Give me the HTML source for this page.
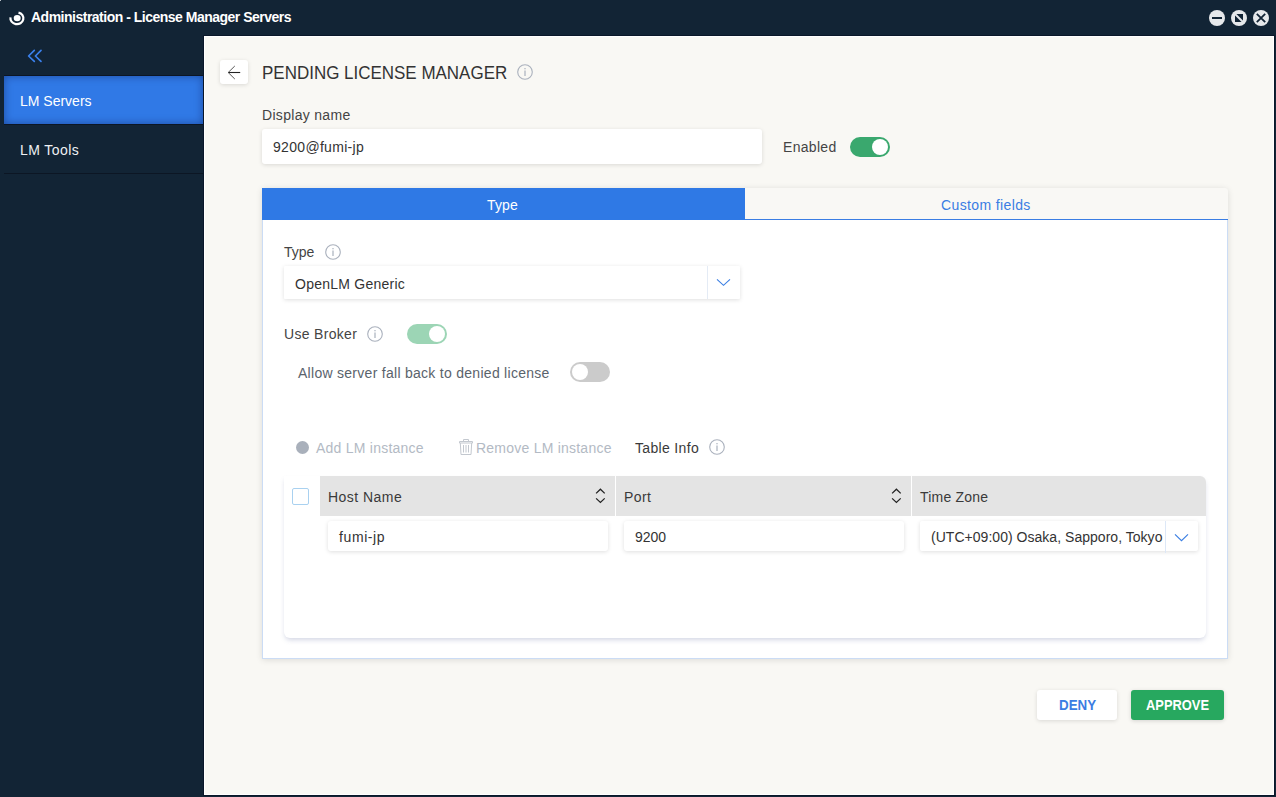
<!DOCTYPE html>
<html><head><meta charset="utf-8">
<style>
*{margin:0;padding:0;box-sizing:border-box}
html,body{width:1276px;height:797px;overflow:hidden;background:#122435;font-family:"Liberation Sans",sans-serif}
.a{position:absolute}
.t{position:absolute;white-space:nowrap;line-height:1;font-size:14px;color:#3a3a3a}
#content{position:absolute;left:203px;top:35px;width:1072px;height:761px;border:1px solid #0a1729;background:#fff}
#content .in{position:absolute;left:0;top:0;right:0;bottom:0;border-left:1px solid #fff;border-top:1px solid #fff;border-right:1px solid #fff;border-bottom:1px solid #fff;background:#f9f8f4}
.toggle{position:absolute;width:40px;height:20px;border-radius:10px}
.knob{position:absolute;top:2px;width:16px;height:16px;border-radius:50%;background:#fff}
.info{position:absolute;width:16px;height:16px}
.box{position:absolute;background:#fff;border-radius:3px;box-shadow:0 1px 4px rgba(0,0,0,.13)}
</style></head><body>

<!-- title bar -->
<div class="a" style="left:0;top:0;width:1px;height:1px;background:#bac1c8"></div>
<svg class="a" style="left:5px;top:6px" width="24" height="24" viewBox="0 0 24 24">
  <ellipse cx="12.2" cy="12.1" rx="3.5" ry="3.2" fill="#fff"/>
  <path d="M13.5 6.58 A6.5 5.9 0 1 1 5.48 11.38" fill="none" stroke="#fff" stroke-width="2.2"/>
</svg>
<div id="t1" class="t" style="left:31px;top:10px;font-size:14px;letter-spacing:-0.5px;font-weight:bold;color:#fff">Administration - License Manager Servers</div>

<svg class="a" style="left:1205px;top:6px" width="70" height="24" viewBox="0 0 70 24">
  <circle cx="12" cy="12" r="8" fill="#e6e8eb"/>
  <rect x="7" y="11" width="10" height="2" fill="#122435"/>
  <circle cx="34" cy="12" r="8" fill="#e6e8eb"/>
  <rect x="30" y="8" width="8" height="8" fill="#122435"/>
  <line x1="29.5" y1="7.5" x2="38.5" y2="16.5" stroke="#e6e8eb" stroke-width="2"/>
  <circle cx="56" cy="12" r="8" fill="#e6e8eb"/>
  <path d="M51.8 7.8 L60.2 16.2 M60.2 7.8 L51.8 16.2" stroke="#122435" stroke-width="1.8"/>
</svg>

<!-- sidebar -->
<svg class="a" style="left:26px;top:48px" width="20" height="16" viewBox="0 0 20 16">
  <path d="M8.3 2.4 L2.6 8 L8.3 13.4 M15 2.4 L9.4 8 L15 13.4" fill="none" stroke="#3a80ec" stroke-width="1.7" stroke-linecap="round" stroke-linejoin="round"/>
</svg>
<div class="a" style="left:4px;top:75px;width:199px;height:1px;background:#0c1624"></div>
<div class="a" style="left:4px;top:76px;width:199px;height:48px;background:#3079e6;box-shadow:inset 0 0 9px rgba(0,10,60,.4)"></div>
<div class="a" style="left:4px;top:124px;width:199px;height:1px;background:#0c1624"></div>
<div id="t2" class="t" style="left:20px;top:94px;font-size:14px;color:#fff">LM Servers</div>
<div id="t3" class="t" style="left:20px;top:143px;font-size:14px;letter-spacing:0.43px;color:#eef0f3">LM Tools</div>
<div class="a" style="left:4px;top:173px;width:199px;height:1px;background:#0c1624"></div>

<!-- content -->
<div id="content"><div class="in"></div></div>

<!-- back button -->
<div class="box" style="left:220px;top:60px;width:28px;height:24px"></div>
<svg class="a" style="left:220px;top:60px" width="28" height="24" viewBox="0 0 28 24">
  <path d="M20.2 12.5 H8.2" stroke="#222" stroke-width="1.1"/><path d="M14.8 6 L8.2 12.5 L14.8 19" fill="none" stroke="#444" stroke-width="0.9"/>
</svg>

<div id="t4" class="t" style="left:262px;top:64px;font-size:18px;color:#333;transform:scaleX(0.943);transform-origin:0 0">PENDING LICENSE MANAGER</div>
<svg class="info" style="left:517px;top:64px" viewBox="0 0 16 16"><circle cx="8" cy="8" r="7.3" fill="none" stroke="#aab1bd" stroke-width="1.1"/><rect x="7.4" y="4" width="1.2" height="1.3" fill="#aab1bd"/><rect x="7.4" y="6.5" width="1.2" height="5.5" fill="#aab1bd"/></svg>

<div id="t5" class="t" style="left:262px;top:108px;letter-spacing:0.31px;color:#444">Display name</div>
<div class="box" style="left:262px;top:129px;width:500px;height:35px"></div>
<div id="t6" class="t" style="left:273px;top:140px;letter-spacing:0.31px;color:#333">9200@fumi-jp</div>

<div id="t7" class="t" style="left:783px;top:140px;letter-spacing:0.3px;color:#444">Enabled</div>
<div class="toggle" style="left:850px;top:137px;background:#3aa86e"><div class="knob" style="left:22px"></div></div>

<!-- tabs panel -->
<div class="a" style="left:262px;top:188px;width:966px;height:471px;border-top-right-radius:4px;box-shadow:0 1px 6px rgba(0,0,0,.12)"></div>
<div class="a" style="left:262px;top:188px;width:966px;height:32px;background:#f9f8f5;border-top-right-radius:4px"></div>
<div class="a" style="left:262px;top:188px;width:483px;height:32px;background:#2f79e5"></div>
<div class="a" style="left:745px;top:219px;width:483px;height:1px;background:#3a7de3"></div>
<div id="t8" class="t" style="left:487px;top:198px;letter-spacing:0.17px;color:#fff">Type</div>
<div id="t9" class="t" style="left:941px;top:198px;letter-spacing:0.38px;color:#3a7de3">Custom fields</div>
<div class="a" style="left:262px;top:220px;width:966px;height:439px;background:#fff;border:1px solid #cbdcf5;border-top:none"></div>

<div id="t10" class="t" style="left:284px;top:245px;color:#444">Type</div>
<svg class="info" style="left:325px;top:244px" viewBox="0 0 16 16"><circle cx="8" cy="8" r="7.3" fill="none" stroke="#aab1bd" stroke-width="1.1"/><rect x="7.4" y="4" width="1.2" height="1.3" fill="#aab1bd"/><rect x="7.4" y="6.5" width="1.2" height="5.5" fill="#aab1bd"/></svg>
<div class="box" style="left:284px;top:266px;width:456px;height:33px;border-radius:1px"></div>
<div class="a" style="left:707px;top:266px;width:1px;height:33px;background:#e4ebf5"></div>
<svg class="a" style="left:714px;top:274px" width="18" height="16" viewBox="0 0 18 16"><path d="M3 5.3 L9.5 11.3 L16 5.3" fill="none" stroke="#3b7fe3" stroke-width="1.15"/></svg>
<div id="t11" class="t" style="left:295px;top:277px;letter-spacing:0.24px;color:#333">OpenLM Generic</div>

<div id="t12" class="t" style="left:284px;top:327px;letter-spacing:0.31px;color:#444">Use Broker</div>
<svg class="info" style="left:367px;top:326px" viewBox="0 0 16 16"><circle cx="8" cy="8" r="7.3" fill="none" stroke="#aab1bd" stroke-width="1.1"/><rect x="7.4" y="4" width="1.2" height="1.3" fill="#aab1bd"/><rect x="7.4" y="6.5" width="1.2" height="5.5" fill="#aab1bd"/></svg>
<div class="toggle" style="left:407px;top:324px;background:#9cd5b5"><div class="knob" style="left:22px"></div></div>

<div id="t13" class="t" style="left:298px;top:366px;letter-spacing:0.28px;color:#5a636c">Allow server fall back to denied license</div>
<div class="toggle" style="left:570px;top:362px;background:#cbcbcb"><div class="knob" style="left:2px"></div></div>

<!-- actions -->
<div class="a" style="left:296px;top:441px;width:13px;height:13px;border-radius:50%;background:#a9b0bb"></div>
<div id="t14" class="t" style="left:316px;top:441px;letter-spacing:0.24px;color:#b3bac4">Add LM instance</div>
<svg class="a" style="left:455px;top:435px" width="22" height="22" viewBox="0 0 22 22">
  <g fill="none" stroke="#c3c8cf" stroke-width="1">
  <path d="M8.5 6 V4.5 H13.5 V6"/>
  <path d="M4.5 6.5 H17.5 V8 H4.5 Z"/>
  <path d="M5.3 8 L6 19.5 H16 L16.7 8"/>
  <path d="M8.5 10 V17.5 M11 10 V17.5 M13.5 10 V17.5"/>
  </g>
</svg>
<div id="t15" class="t" style="left:476px;top:441px;letter-spacing:0.23px;color:#b3bac4">Remove LM instance</div>
<div id="t16" class="t" style="left:635px;top:441px;letter-spacing:0.33px;color:#3a3a3a">Table Info</div>
<svg class="info" style="left:709px;top:439px" viewBox="0 0 16 16"><circle cx="8" cy="8" r="7.3" fill="none" stroke="#aab1bd" stroke-width="1.1"/><rect x="7.4" y="4" width="1.2" height="1.3" fill="#aab1bd"/><rect x="7.4" y="6.5" width="1.2" height="5.5" fill="#aab1bd"/></svg>

<!-- table card -->
<div class="a" style="left:284px;top:476px;width:922px;height:162px;background:#fff;border-radius:0 6px 6px 6px;box-shadow:0 3px 5px -1px rgba(110,120,165,.3)"></div>
<div class="a" style="left:292px;top:488px;width:17px;height:17px;border:1px solid #a9d1f0;border-radius:2px;background:#fff"></div>
<div class="a" style="left:320px;top:476px;width:886px;height:40px;background:#e4e4e4;border-top-right-radius:6px"></div>
<div class="a" style="left:615px;top:476px;width:1px;height:40px;background:#fff"></div>
<div class="a" style="left:911px;top:476px;width:1px;height:40px;background:#fff"></div>
<div id="t17" class="t" style="left:328px;top:490px;letter-spacing:0.46px;color:#3a3a3a">Host Name</div>
<div id="t18" class="t" style="left:624px;top:490px;letter-spacing:0.4px;color:#3a3a3a">Port</div>
<div id="t19" class="t" style="left:920px;top:490px;letter-spacing:0.2px;color:#3a3a3a">Time Zone</div>
<svg class="a" style="left:593px;top:487px" width="14" height="18" viewBox="0 0 14 18"><path d="M3.1 6.4 L7.4 2.2 L11.7 6.4 M3.1 11.4 L7.4 15.5 L11.7 11.4" fill="none" stroke="#222" stroke-width="1.25"/></svg>
<svg class="a" style="left:889px;top:487px" width="14" height="18" viewBox="0 0 14 18"><path d="M3.1 6.4 L7.4 2.2 L11.7 6.4 M3.1 11.4 L7.4 15.5 L11.7 11.4" fill="none" stroke="#222" stroke-width="1.25"/></svg>

<div class="box" style="left:328px;top:521px;width:280px;height:30px"></div>
<div id="t20" class="t" style="left:339px;top:530px;letter-spacing:0.6px;color:#333">fumi-jp</div>
<div class="box" style="left:624px;top:521px;width:280px;height:30px"></div>
<div id="t21" class="t" style="left:635px;top:530px;color:#333">9200</div>
<div class="box" style="left:920px;top:521px;width:278px;height:30px;border-radius:2px"></div>
<div class="a" style="left:1165px;top:521px;width:1px;height:32px;background:#dde8f7"></div>
<div id="t22" class="t" style="left:931px;top:530px;letter-spacing:0.03px;color:#333">(UTC+09:00) Osaka, Sapporo, Tokyo</div>
<svg class="a" style="left:1172px;top:529px" width="18" height="16" viewBox="0 0 18 16"><path d="M3 5.3 L9.5 11.6 L16 5.3" fill="none" stroke="#3b7fe3" stroke-width="1.15"/></svg>

<!-- buttons -->
<div class="box" style="left:1037px;top:690px;width:80px;height:30px"></div>
<div id="t23" class="t" style="left:1059px;top:698px;font-size:14px;color:#3b7de3;font-weight:bold;transform:scaleX(0.955);transform-origin:0 0">DENY</div>
<div class="a" style="left:1131px;top:690px;width:93px;height:30px;background:#27a85f;border-radius:3px;box-shadow:0 1px 4px rgba(0,0,0,.15)"></div>
<div id="t24" class="t" style="left:1146px;top:698px;font-size:14px;color:#fff;font-weight:bold;transform:scaleX(0.92);transform-origin:0 0">APPROVE</div>

</body></html>
